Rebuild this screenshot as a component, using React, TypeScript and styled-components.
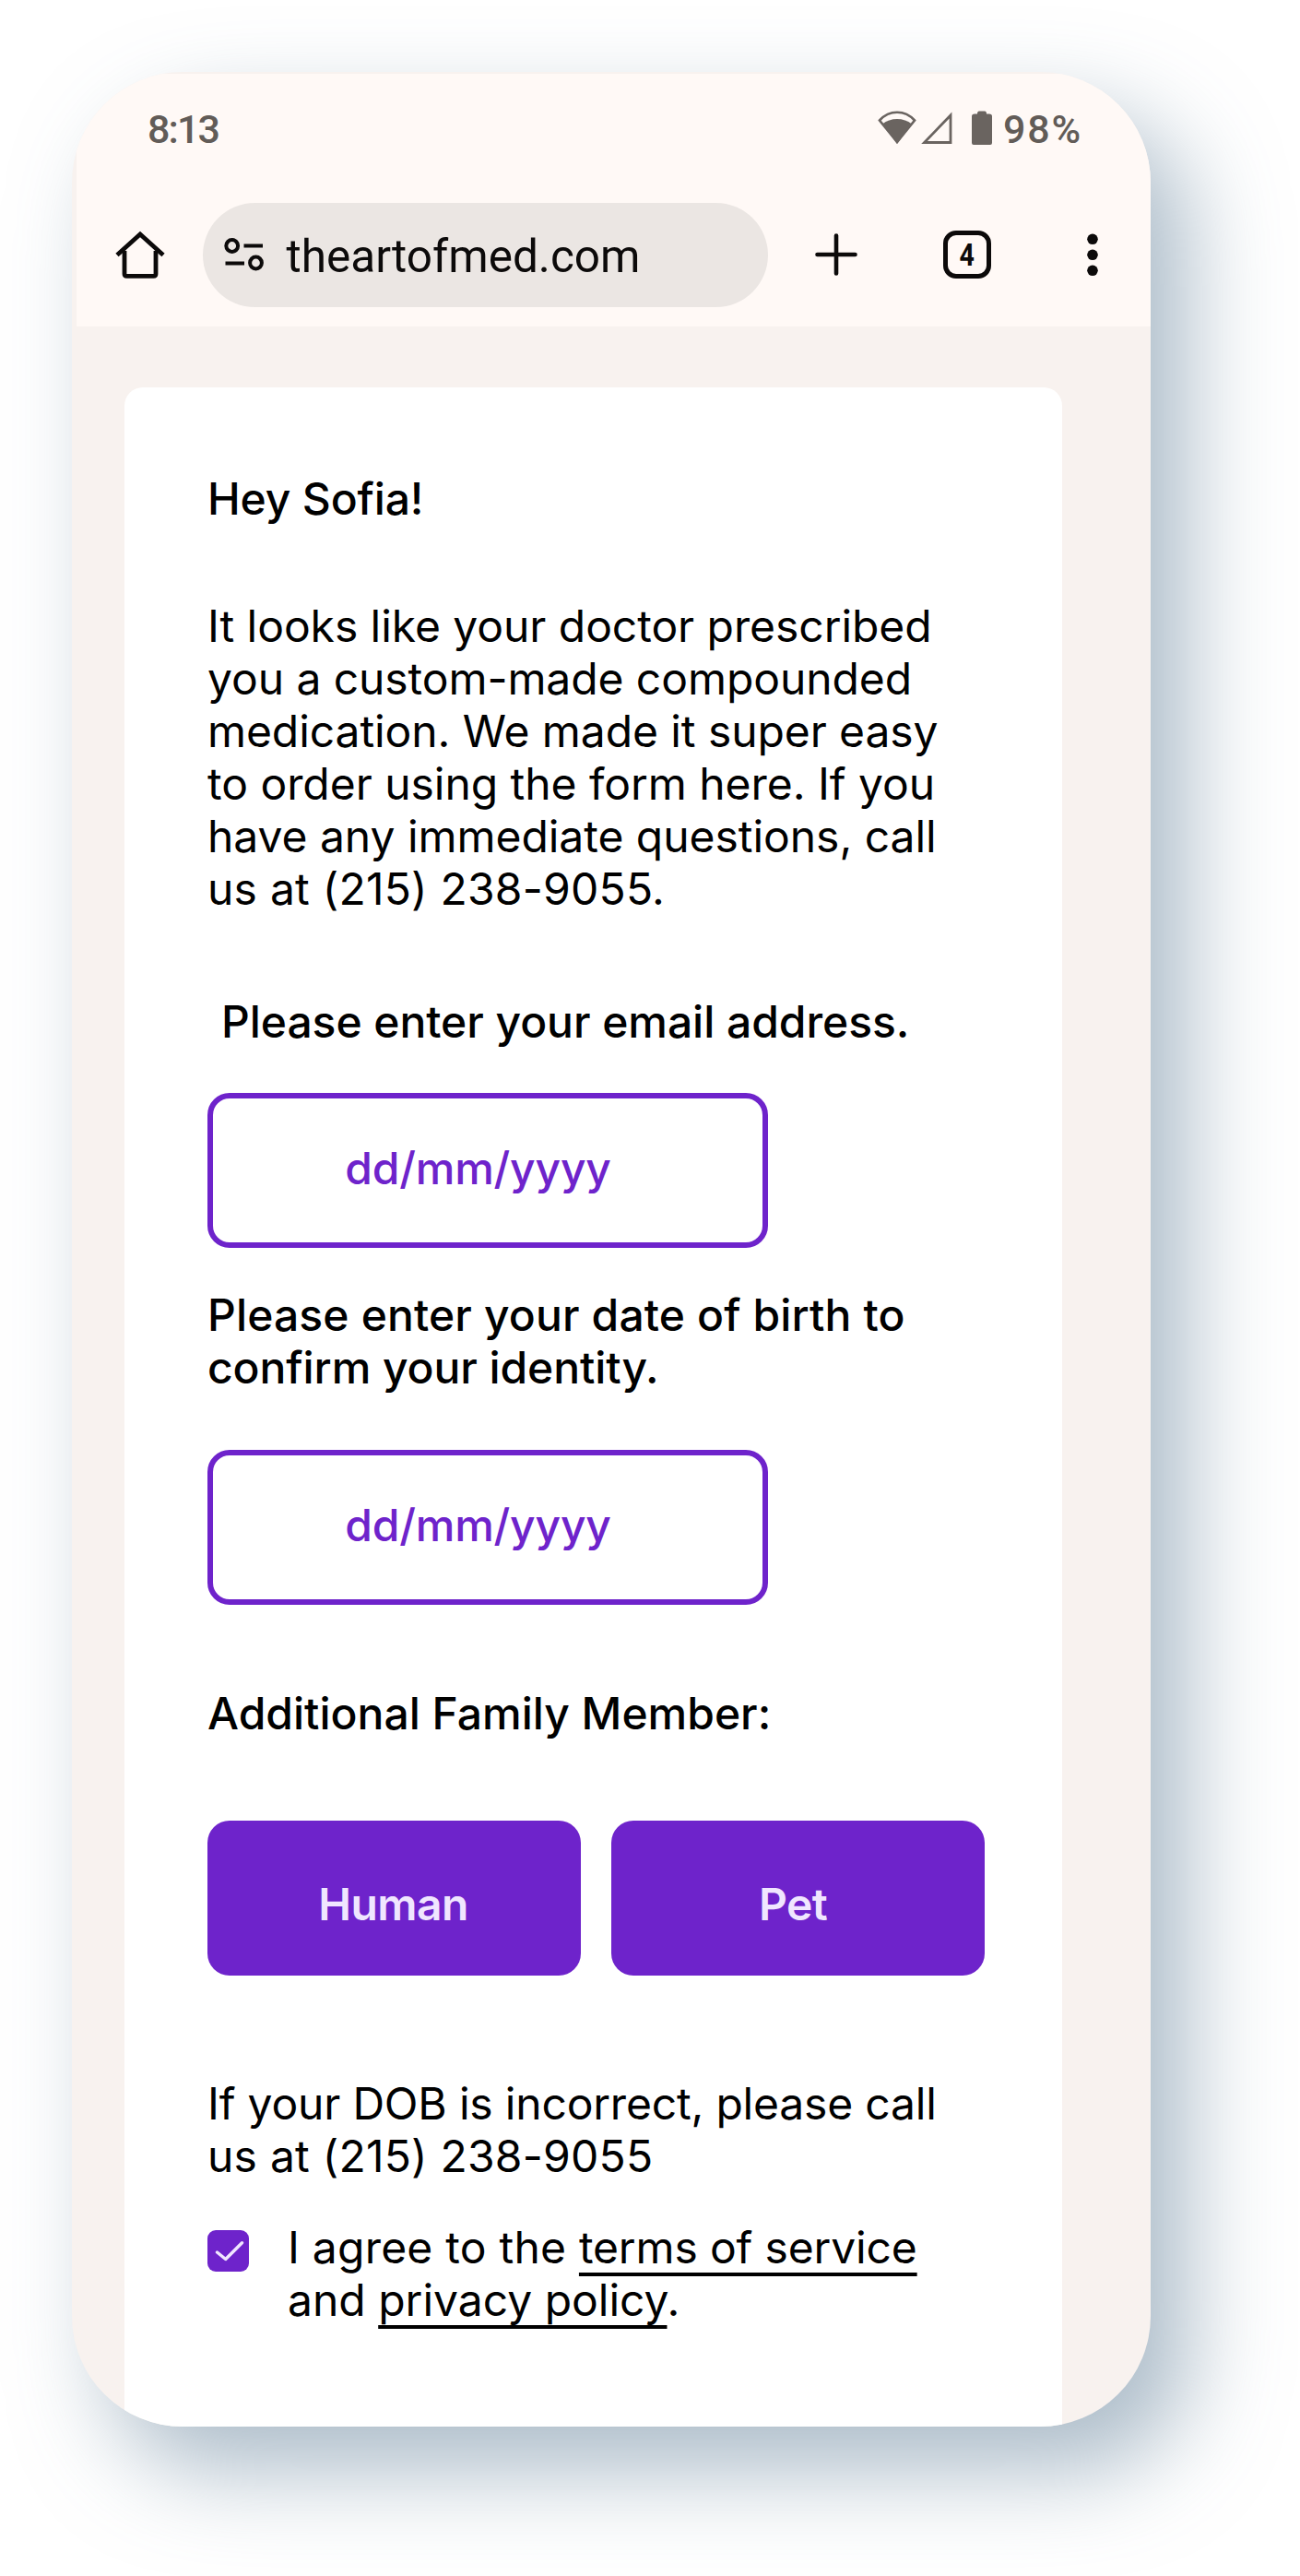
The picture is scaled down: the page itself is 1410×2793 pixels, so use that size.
import React from "react";
import styled, { createGlobalStyle } from "styled-components";

const violet = "#6e23cb";
const lilac = "#f0e6ff";
const ui = `Roboto, "Liberation Sans", sans-serif`;

const GlobalStyle = createGlobalStyle`
  * { box-sizing: border-box; }
  body { margin: 0; background: #fff; }
`;

const Page = styled.main`
  width: 1410px;
  height: 2793px;
  padding: 78px;
  overflow: hidden;
  background: #fff;
`;

const Phone = styled.section`
  display: flex;
  flex-direction: column;
  width: 1170px;
  height: 2553px;
  padding: 2px 0 0 5px;
  border-radius: 120px;
  overflow: hidden;
  background: #f8f2ef;
  box-shadow: 40px 48px 100px rgba(89, 121, 147, 0.5);
`;

const Browser = styled.header`
  display: flex;
  flex-direction: column;
  flex: none;
  height: 274px;
  background: #fff9f6;
`;

const StatusBar = styled.div`
  display: flex;
  align-items: center;
  justify-content: space-between;
  height: 118px;
  padding: 0 74px 0 77px;
  color: #625c58;
  font: 500 43px/48px ${ui};
`;

const StatusIcons = styled.div`
  display: flex;
  align-items: center;
  color: #6a6460;
`;

const Clock = styled.span`
  padding-top: 1px;
  letter-spacing: -1.9px;
`;

const Battery = styled.span`
  padding-top: 1px;
  margin-left: 12px;
  color: #625c58;
  letter-spacing: 1.8px;
`;

const WifiGlyph = styled.svg``;

const SignalGlyph = styled.svg`
  margin-left: 4px;
`;

const BatteryGlyph = styled.svg`
  margin-left: 20px;
`;

const Toolbar = styled.div`
  display: flex;
  align-items: center;
  height: 156px;
  padding: 0 0 0 40px;
  color: #0c0a0a;
`;

const AddressBar = styled.div`
  display: flex;
  align-items: center;
  width: 613px;
  height: 113px;
  margin-left: 39px;
  padding-left: 22px;
  border-radius: 57px;
  background: #ebe6e3;
`;

const Url = styled.span`
  margin-left: 22.500px;
  padding-top: 4px;
  font: 400 49.5px/58px ${ui};
`;

const PlusIcon = styled.svg`
  margin-left: 50px;
`;

const TabCount = styled.div`
  display: flex;
  align-items: center;
  justify-content: center;
  width: 52px;
  height: 52px;
  margin-left: 92px;
  border: 5px solid currentColor;
  border-radius: 14px;
  font: 700 34px/36px ${ui};
`;

const TabNumber = styled.span`
  transform: scaleX(0.84);
`;

const MenuIcon = styled.svg`
  margin-left: 103px;
`;

const Card = styled.div`
  display: flex;
  flex-direction: column;
  flex: 1;
  width: 1017px;
  margin: 66px 0 0 52px;
  padding: 92px 84px 0 90px;
  border-radius: 20px 20px 0 0;
  background: #fff;
  color: #000;
  font: 400 48px/57px Inter, sans-serif;
`;

const Copy = styled.p<{ $top?: number; $medium?: boolean; $indent?: number }>`
  margin: ${(p) => p.$top ?? 0}px 0 0;
  padding-left: ${(p) => p.$indent ?? 0}px;
  font-weight: ${(p) => (p.$medium ? 500 : 400)};
  white-space: nowrap;
`;

const Track = styled.span<{ $by: number }>`
  letter-spacing: ${(p) => p.$by}px;
`;

const Field = styled.div<{ $top: number }>`
  display: flex;
  align-items: center;
  justify-content: center;
  width: 608px;
  height: 168px;
  margin-top: ${(p) => p.$top}px;
  padding: 0 21px 5px 0;
  border: 6px solid ${violet};
  border-radius: 24px;
  color: ${violet};
  font-weight: 500;
  letter-spacing: -0.2px;
`;

const Choices = styled.div`
  display: grid;
  grid-template-columns: 405px 405px;
  gap: 33px;
  margin-top: 88px;
`;

const Choice = styled.button<{ $shift: number }>`
  height: 168px;
  padding: 13px ${(p) => p.$shift}px 0 0;
  border: 0;
  border-radius: 24px;
  background: ${violet};
  color: ${lilac};
  font: 600 48px/57px Inter, sans-serif;
  letter-spacing: -0.6px;
`;

const Consent = styled.div`
  display: flex;
  align-items: flex-start;
  margin-top: 42px;
`;

const Checkbox = styled.span`
  display: flex;
  width: 45px;
  height: 45px;
  margin: 10px 42px 0 0;
  border-radius: 9px;
  background: ${violet};
`;

const Link = styled.a`
  color: inherit;
  text-decoration: underline;
  text-decoration-thickness: 3.5px;
  text-underline-offset: 10px;
  text-decoration-skip-ink: none;
`;

function HomeIcon() {
  return (
    <svg width="58" height="56" viewBox="0 0 58 56" fill="none" stroke="currentColor" strokeWidth="4.800">
      <path d="M4 28.500 L29 6 L54 28.500" strokeLinejoin="miter" />
      <path d="M12 24 V49 Q12 51.400 14.500 51.400 H43.500 Q46 51.400 46 49 V24" />
    </svg>
  );
}

function SiteIcon() {
  return (
    <svg width="46" height="40" viewBox="0 0 46 40" fill="none" stroke="currentColor" strokeWidth="4">
      <circle cx="9.700" cy="10.500" r="6.400" />
      <path d="M22.500 10.500 H43 M2.500 29.500 H23" />
      <circle cx="35.500" cy="29" r="6.400" />
    </svg>
  );
}

function WifiIcon() {
  return (
    <WifiGlyph width="42" height="38" viewBox="0 0 42 38">
      <path d="M21 34 L2 10.500 Q10 1.800 21 1.800 Q32 1.800 40 10.500 Z" fill="none" stroke="currentColor" strokeWidth="2.600" />
      <path d="M21 36 L5 14.500 Q12 9 21 9 Q30 9 37 14.500 Z" fill="currentColor" />
    </WifiGlyph>
  );
}

function SignalIcon() {
  return (
    <SignalGlyph width="36" height="38" viewBox="0 0 36 38">
      <path d="M4.500 34.500 H33 V5 Z" fill="none" stroke="currentColor" strokeWidth="2.800" />
    </SignalGlyph>
  );
}

function BatteryIcon() {
  return (
    <BatteryGlyph width="22" height="38" viewBox="0 0 22 38">
      <path d="M6 3.500 Q6 0.500 8 0.500 H14 Q16 0.500 16 3.500 H19 Q22 3.500 22 6 V35 Q22 37 20 37 H2 Q0 37 0 35 V6 Q0 3.500 3 3.500 Z" fill="currentColor" />
    </BatteryGlyph>
  );
}

export default function App() {
  return (
    <Page>
      <GlobalStyle />
      <Phone>
        <Browser>
          <StatusBar>
            <Clock>8:13</Clock>
            <StatusIcons>
              <WifiIcon />
              <SignalIcon />
              <BatteryIcon />
              <Battery>98%</Battery>
            </StatusIcons>
          </StatusBar>
          <Toolbar>
            <HomeIcon />
            <AddressBar>
              <SiteIcon />
              <Url>theartofmed.com</Url>
            </AddressBar>
            <PlusIcon width="48" height="48" viewBox="0 0 48 48" fill="none" stroke="currentColor" strokeWidth="4.600" strokeLinecap="round">
              <path d="M24 3.500 V44.500 M3.500 24 H44.500" />
            </PlusIcon>
            <TabCount>
              <TabNumber>4</TabNumber>
            </TabCount>
            <MenuIcon width="14" height="48" viewBox="0 0 14 48" fill="currentColor">
              <circle cx="7" cy="7.300" r="5.800" />
              <circle cx="7" cy="24.300" r="5.800" />
              <circle cx="7" cy="41.300" r="5.800" />
            </MenuIcon>
          </Toolbar>
        </Browser>

        <Card>
          <Copy $medium>
            <Track $by={-0.15}>Hey Sofia!</Track>
          </Copy>
          <Copy $top={81}>
            <Track $by={-0.06}>It looks like your doctor prescribed</Track>
            <br />
            <Track $by={-0.08}>you a custom-made compounded</Track>
            <br />
            <Track $by={-0.08}>medication. We made it super easy</Track>
            <br />
            <Track $by={-0.04}>to order using the form here. If you</Track>
            <br />
            <Track $by={-0.04}>have any immediate questions, call</Track>
            <br />
            <Track $by={0.22}>us at (215) 238-9055.</Track>
          </Copy>
          <Copy $medium $top={87} $indent={15}>
            <Track $by={-0.05}>Please enter your email address.</Track>
          </Copy>
          <Field $top={49}>dd/mm/yyyy</Field>
          <Copy $medium $top={44}>
            <Track $by={0.14}>Please enter your date of birth to</Track>
            <br />
            <Track $by={-0.08}>confirm your identity.</Track>
          </Copy>
          <Field $top={61}>dd/mm/yyyy</Field>
          <Copy $medium $top={89}>Additional Family Member:</Copy>
          <Choices>
            <Choice $shift={2}>Human</Choice>
            <Choice $shift={11}>Pet</Choice>
          </Choices>
          <Copy $top={110}>
            <Track $by={-0.19}>If your DOB is incorrect, please call</Track>
            <br />
            <Track $by={0.22}>us at (215) 238-9055</Track>
          </Copy>
          <Consent>
            <Checkbox>
              <svg width="45" height="45" viewBox="0 0 45 45" fill="none" stroke={lilac} strokeWidth="3.400" strokeLinecap="round" strokeLinejoin="round">
                <path d="M10.500 24 L19.700 31.500 L37.500 13.800" />
              </svg>
            </Checkbox>
            <Copy>
              <Track $by={0.22}>I agree to the </Track>
              <Link>
                <Track $by={-0.15}>terms of service</Track>
              </Link>
              <br />
              and <Link>privacy policy</Link>.
            </Copy>
          </Consent>
        </Card>
      </Phone>
    </Page>
  );
}
